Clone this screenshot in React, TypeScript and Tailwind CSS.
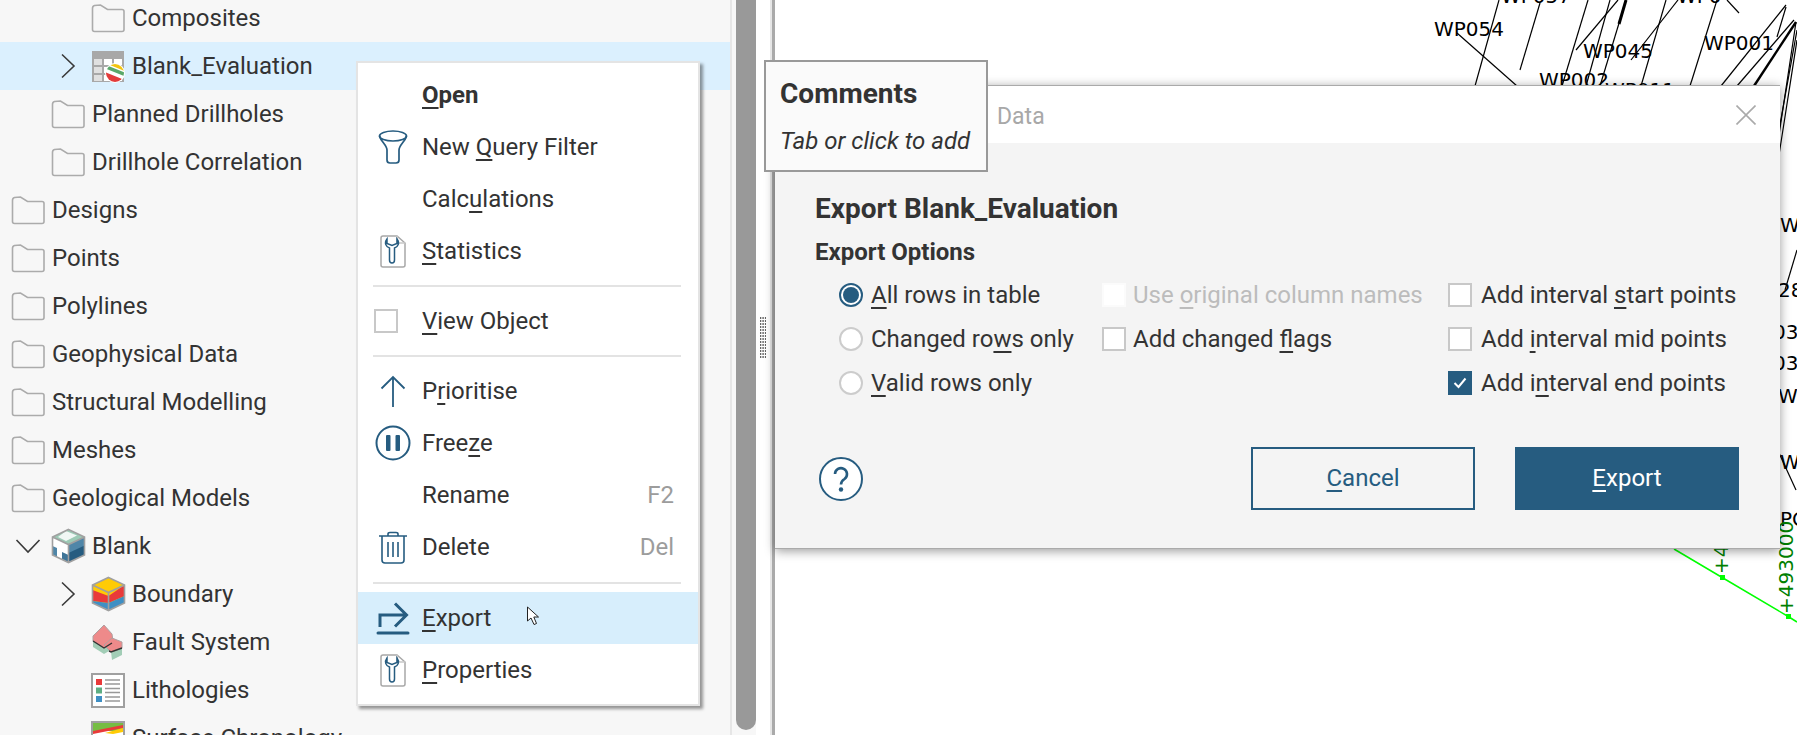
import React from "react";

// "&" marks the mnemonic letter, same as the app's own labels
function Mn({ text }: { text: string }) {
  const i = text.indexOf("&");
  if (i < 0) return <>{text}</>;
  return (
    <>
      {text.slice(0, i)}
      <span className="underline decoration-[1.5px] underline-offset-[4px] [text-decoration-skip-ink:none]">{text[i + 1]}</span>
      {text.slice(i + 2)}
    </>
  );
}

function FolderIcon() {
  return (
    <svg width="34" height="29" viewBox="0 0 34 29" fill="none" stroke="#ababab" strokeWidth="1.6">
      <path d="M1.5 4.5 Q1.5 2 3.5 1.5 L9.5 1 L16.5 5.5 L31 5.5 Q33 5.5 33 7.5 L33 25.5 Q33 27.5 31 27.5 L3.5 27.5 Q1.5 27.5 1.5 25.5 Z" />
    </svg>
  );
}

function TableIcon() {
  return (
    <svg width="34" height="33" viewBox="0 0 34 33">
      <defs>
        <clipPath id="ball">
          <circle cx="24" cy="23" r="9" />
        </clipPath>
      </defs>
      <rect x="1" y="1" width="32" height="31" fill="#a8a8a8" />
      {[3, 13, 23].map((x) =>
        [9, 17, 25].map((y) => <rect key={`${x}-${y}`} x={x} y={y} width="8" height="6" fill={x === 3 ? "#e0e0e0" : "#ffffff"} />)
      )}
      <circle cx="24" cy="23" r="10" fill="#ffffff" />
      <g clipPath="url(#ball)">
        <g transform="rotate(22 24 23)">
          <rect x="12" y="13" width="24" height="4.5" fill="#f2c40f" />
          <rect x="12" y="19" width="24" height="3.5" fill="#59a86a" />
          <rect x="12" y="26" width="24" height="8" fill="#e23b3b" />
        </g>
      </g>
    </svg>
  );
}

function BlankCube() {
  return (
    <svg width="35" height="36" viewBox="0 0 35 36">
      <path d="M17.5 1.5 L33.5 9 L33.5 27 L17.5 34.5 L1.5 27 L1.5 9 Z" fill="#ffffff" />
      <path d="M17.5 1.5 L33.5 9 L17.5 16.5 L1.5 9 Z" fill="#9ccab5" />
      <path d="M15 3 L26 7.5 L15 13 L7 9 Z" fill="#ffffff" opacity="0.85" />
      <path d="M17.5 16.5 L33.5 9 L33.5 27 L17.5 34.5 Z" fill="#4f86a8" />
      <path d="M17.5 25 L33.5 17.5 L33.5 27 L17.5 34.5 Z" fill="#265c80" />
      <path d="M1.5 18 L6 20 L6 29 L1.5 27 Z" fill="#4f86a8" />
      <path d="M6 21 L11 23 L11 32 L6 29.5 Z" fill="#ffffff" />
      <path d="M11 24 L17.5 27 L17.5 34.5 L11 31.5 Z" fill="#3f7598" />
      <path d="M17.5 1.5 L33.5 9 L33.5 27 L17.5 34.5 L1.5 27 L1.5 9 Z M1.5 9 L17.5 16.5 L33.5 9 M17.5 16.5 L17.5 34.5" fill="none" stroke="#a0a0a0" strokeWidth="1.6" />
    </svg>
  );
}

function BoundaryCube() {
  return (
    <svg width="35" height="36" viewBox="0 0 35 36">
      <path d="M17.5 1.5 L33.5 9 L33.5 27 L17.5 34.5 L1.5 27 L1.5 9 Z" fill="#ffcb05" />
      <path d="M1.5 14 L17.5 20 L33.5 9 L33.5 20 L17.5 27 L1.5 25 Z" fill="#e93a3a" />
      <path d="M1.5 25 L17.5 27 L33.5 20 L33.5 27 L17.5 34.5 L1.5 27 Z" fill="#3f8fc4" />
      <path d="M17.5 1.5 L33.5 9 L33.5 27 L17.5 34.5 L1.5 27 L1.5 9 Z M1.5 9 L17.5 16.5 L33.5 9 M17.5 16.5 L17.5 34.5" fill="none" stroke="#a0a0a0" strokeWidth="1.6" />
    </svg>
  );
}

function FaultIcon() {
  return (
    <svg width="34" height="37" viewBox="0 0 34 37">
      <path d="M2 17 L13 24 L13 30 L2 23 Z" fill="#a2cdb6" />
      <path d="M13 24 L18 21 L18 27 L13 30 Z" fill="#a2cdb6" />
      <path d="M20 28 L31 24 L31 31 L21 36 Z" fill="#a2cdb6" />
      <path d="M13 1 L2 12 L2 17 L13 24 L22 17 L21 10 Z" fill="#ee8a8a" stroke="#b0a0a0" strokeWidth="1" />
      <path d="M21 14 L13 21 L20 28 L31 24 L31 18 Z" fill="#ee8a8a" stroke="#b0a0a0" strokeWidth="1" />
      <path d="M2 17 L13 24 L21 19" fill="none" stroke="#333333" strokeWidth="1.4" />
      <path d="M18 27 L20 28 L31 24" fill="none" stroke="#333333" strokeWidth="1.4" />
    </svg>
  );
}

function LegendIcon() {
  return (
    <svg width="34" height="35" viewBox="0 0 34 35">
      <rect x="1" y="1" width="32" height="33" fill="#ffffff" stroke="#a0a0a0" strokeWidth="2" />
      <rect x="5" y="6" width="6" height="6" fill="#e93a3a" />
      <rect x="5" y="14.5" width="6" height="6" fill="#5dae83" />
      <rect x="5" y="23" width="6" height="6" fill="#3f8fc4" />
      <path d="M14 7 H29 M14 11 H29 M14 15.5 H29 M14 19.5 H29 M14 24 H29 M14 28 H29" stroke="#999999" strokeWidth="1.6" />
    </svg>
  );
}

function ChronologyIcon() {
  return (
    <svg width="34" height="35" viewBox="0 0 34 35">
      <rect x="1" y="1" width="32" height="33" fill="#ffffff" stroke="#a0a0a0" strokeWidth="2" />
      <rect x="2" y="2" width="30" height="8" fill="#76bd43" />
      <path d="M2 10 L32 4 L32 7 L2 13 Z" fill="#e93a3a" />
      <path d="M14 12 L32 7 L32 11 L22 13 Z" fill="#ffcb05" />
    </svg>
  );
}

function ChevronRight() {
  return (
    <svg width="16" height="26" viewBox="0 0 16 26" fill="none" stroke="#3a3a3a" strokeWidth="1.6" className="ml-[9px]">
      <path d="M2 1.5 L14 13 L2 24.5" />
    </svg>
  );
}

function ChevronDown() {
  return (
    <svg width="26" height="16" viewBox="0 0 26 16" fill="none" stroke="#3a3a3a" strokeWidth="1.6" className="ml-[4px]">
      <path d="M1.5 2 L13 14 L24.5 2" />
    </svg>
  );
}

const treeIcons: Record<string, React.ReactNode> = {
  folder: <FolderIcon />,
  table: <TableIcon />,
  blank: <BlankCube />,
  boundary: <BoundaryCube />,
  fault: <FaultIcon />,
  legend: <LegendIcon />,
  chrono: <ChronologyIcon />,
};

type TreeRow = { label: string; level: number; icon: string; arrow?: "right" | "down"; selected?: boolean };

const treeRows: TreeRow[] = [
  { label: "Composites", level: 2, icon: "folder" },
  { label: "Blank_Evaluation", level: 2, icon: "table", arrow: "right", selected: true },
  { label: "Planned Drillholes", level: 1, icon: "folder" },
  { label: "Drillhole Correlation", level: 1, icon: "folder" },
  { label: "Designs", level: 0, icon: "folder" },
  { label: "Points", level: 0, icon: "folder" },
  { label: "Polylines", level: 0, icon: "folder" },
  { label: "Geophysical Data", level: 0, icon: "folder" },
  { label: "Structural Modelling", level: 0, icon: "folder" },
  { label: "Meshes", level: 0, icon: "folder" },
  { label: "Geological Models", level: 0, icon: "folder" },
  { label: "Blank", level: 1, icon: "blank", arrow: "down" },
  { label: "Boundary", level: 2, icon: "boundary", arrow: "right" },
  { label: "Fault System", level: 2, icon: "fault" },
  { label: "Lithologies", level: 2, icon: "legend" },
  { label: "Surface Chronology", level: 2, icon: "chrono" },
];

function Tree() {
  return (
    <div className="w-[732px] h-full shrink-0 border-r-2 border-[#e6e6e6] overflow-hidden">
      <div className="-mt-[6px]">
        {treeRows.map((r) => (
          <div key={r.label} className={`flex items-center h-12 pl-[11px] ${r.selected ? "bg-[#dbf0fe]" : ""}`}>
            {r.level === 2 && <div className="w-10 shrink-0" />}
            {r.level >= 1 && (
              <div className="w-10 shrink-0">
                {r.arrow === "right" && <ChevronRight />}
                {r.arrow === "down" && <ChevronDown />}
              </div>
            )}
            <div className="w-[41px] shrink-0 flex items-center">{treeIcons[r.icon]}</div>
            <span>{r.label}</span>
          </div>
        ))}
      </div>
    </div>
  );
}

function Grip() {
  return (
    <svg width="6" height="42" viewBox="0 0 6 42">
      {Array.from({ length: 14 }).map((_, row) =>
        [0, 2.5, 5].map((x) => <rect key={`${row}-${x}`} x={x - 0.1} y={row * 3} width="1.4" height="2" fill="#666666" />)
      )}
    </svg>
  );
}

const menuIconClass = "fill-none stroke-[#265c80]";

function FunnelIcon() {
  return (
    <svg width="30" height="36" viewBox="0 0 30 36" className={menuIconClass} strokeWidth="1.7">
      <ellipse cx="15" cy="7" rx="13.5" ry="5" />
      <path d="M1.5 7 C3 13 9 16 9 21 L9 31 Q9 34 12 34 L18 34 Q21 34 21 31 L21 21 C21 16 27 13 28.5 7" />
    </svg>
  );
}

function DocWrenchIcon() {
  return (
    <svg width="26" height="33" viewBox="0 0 26 33" fill="none" strokeWidth="1.5">
      <path d="M3 1 H17 L25 8 V30 Q25 32 23 32 H3 Q1 32 1 30 V3 Q1 1 3 1 Z" stroke="#a8a8a8" />
      <path d="M17 1 V8 H25" stroke="#c8c8c8" />
      <path d="M7 4 C4 8 6 12 9.5 13 V25 Q9.5 28 12 28 Q14.5 28 14.5 25 V13 C18 12 20 8 17 4 V8.5 L12 10.5 L7 8.5 Z" stroke="#265c80" />
    </svg>
  );
}

function ArrowUpIcon() {
  return (
    <svg width="26" height="33" viewBox="0 0 26 33" className={menuIconClass} strokeWidth="1.8">
      <path d="M13 2 V32 M1.5 13.5 L13 2 L24.5 13.5" />
    </svg>
  );
}

function PauseIcon() {
  return (
    <svg width="36" height="36" viewBox="0 0 36 36">
      <circle cx="18" cy="18" r="16.5" fill="none" stroke="#265c80" strokeWidth="2" />
      <rect x="11" y="10" width="4.5" height="16" rx="1" fill="#265c80" />
      <rect x="20.5" y="10" width="4.5" height="16" rx="1" fill="#265c80" />
    </svg>
  );
}

function TrashIcon() {
  return (
    <svg width="30" height="33" viewBox="0 0 30 33" className={menuIconClass} strokeWidth="1.6">
      <path d="M1 5 H29 M10 5 V3 Q10 1.5 12 1.5 H18 Q20 1.5 20 3 V5" />
      <path d="M4 5 V29 Q4 32 7 32 H23 Q26 32 26 29 V5" />
      <path d="M10 11 V26 M15 11 V26 M20 11 V26" />
    </svg>
  );
}

function ExportIcon() {
  return (
    <svg width="34" height="33" viewBox="0 0 34 33" fill="none" stroke="#265c80" strokeWidth="3">
      <path d="M4 25 V13 H30 M19 1.5 L30.5 13 L19 24.5" />
      <path d="M2 31 H32" strokeLinecap="round" />
    </svg>
  );
}

function Sep({ h }: { h: string }) {
  return (
    <div className={`${h} flex items-center pl-[15px] pr-[17px]`}>
      <div className="h-[2px] w-full bg-[#e3e3e3]" />
    </div>
  );
}

function MenuItem({ label, icon, shortcut, bold, hover }: { label: string; icon?: React.ReactNode; shortcut?: string; bold?: boolean; hover?: boolean }) {
  return (
    <div className={`flex items-center h-[52px] ${hover ? "bg-[#d7eefc]" : ""} ${bold ? "font-bold" : ""}`}>
      <div className="w-[64px] shrink-0 flex justify-center pl-[6px]">{icon}</div>
      <span className="flex-1"><Mn text={label} /></span>
      {shortcut && <span className="pr-[24px] text-[#9c9c9c]">{shortcut}</span>}
    </div>
  );
}

function ContextMenu() {
  return (
    <div className="absolute left-[356px] top-[61px] w-[344px] h-[645px] bg-white border-2 border-[#e4e4e4] pt-[6px] shadow-[3px_3px_3px_rgba(0,0,0,0.4)]">
      <MenuItem label="&Open" bold />
      <MenuItem label="New &Query Filter" icon={<FunnelIcon />} />
      <MenuItem label="Calc&ulations" />
      <MenuItem label="&Statistics" icon={<DocWrenchIcon />} />
      <Sep h="h-[18px]" />
      <MenuItem
        label="&View Object"
        icon={<div className="w-6 h-6 border-2 border-[#c8c8c8] bg-white -ml-[7px] mr-[7px]" />}
      />
      <Sep h="h-[18px]" />
      <MenuItem label="P&rioritise" icon={<ArrowUpIcon />} />
      <MenuItem label="Free&ze" icon={<PauseIcon />} />
      <MenuItem label="Rename" shortcut="F2" />
      <MenuItem label="Delete" icon={<TrashIcon />} shortcut="Del" />
      <Sep h="h-[19px]" />
      <MenuItem label="&Export" icon={<ExportIcon />} hover />
      <MenuItem label="&Properties" icon={<DocWrenchIcon />} />
    </div>
  );
}

function Cursor() {
  return (
    <svg width="14" height="20" viewBox="0 0 14 20" className="absolute left-[526px] top-[606px]">
      <path d="M1.5 1 L1.5 15 L5 12 L8 18.5 L10.5 17.5 L7.8 11 L12.5 11 Z" fill="#ffffff" stroke="#222222" strokeWidth="1" />
    </svg>
  );
}

function CanvasView() {
  const lines = [
    [1499, 0, 1475, 86], [1540, 3, 1520, 70], [1457, 33, 1517, 86], [1588, 0, 1562, 86],
    [1610, 0, 1586, 86], [1618, 0, 1576, 50], [1666, 0, 1641, 86], [1678, 0, 1631, 60],
    [1717, 0, 1690, 86], [1727, 0, 1739, 13], [1786, 5, 1721, 86], [1794, 20, 1737, 86],
    [1786, 7, 1777, 37], [1796, 22, 1779, 135], [1797, 40, 1779, 155], [1797, 30, 1779, 130],
    [1779, 453, 1796, 490], [1797, 250, 1785, 290],
  ];
  const labels: [string, number, number][] = [
    ["WP054", 1434, 36], ["WP057", 1501, 3], ["WP045", 1583, 58], ["WP001", 1704, 50],
    ["WP002", 1539, 87], ["WP011", 1605, 97], ["WP0", 1677, 3],
    ["W", 1780, 232], ["28", 1778, 297], ["03", 1773, 339], ["03", 1773, 370],
    ["W", 1778, 403], ["W", 1780, 469], ["PC", 1780, 526],
  ];
  return (
    <div className="flex-1 h-full bg-white overflow-hidden">
      <svg width="1022" height="735" viewBox="775 0 1022 735" className="block">
        {lines.map((l, i) => (
          <line key={i} x1={l[0]} y1={l[1]} x2={l[2]} y2={l[3]} stroke="#000000" strokeWidth="1.2" />
        ))}
        <line x1="1626" y1="0" x2="1600" y2="86" stroke="#000000" strokeWidth="1.2" />
        <line x1="1626" y1="0" x2="1619" y2="24" stroke="#000000" strokeWidth="3" />
        <line x1="1796" y1="22" x2="1754" y2="86" stroke="#000000" strokeWidth="2.4" />
        {labels.map(([t, x, y], i) => (
          <text key={i} x={x} y={y} fontFamily="DejaVu Sans" fontSize="20" fill="#000000">{t}</text>
        ))}
        <polyline points="1674,549 1723,578 1789,617 1797,622" fill="none" stroke="#00ff00" strokeWidth="1.5" />
        <rect x="1720" y="575" width="5" height="5" fill="#00ff00" />
        <rect x="1786" y="614" width="5" height="5" fill="#00ff00" />
        <text transform="translate(1793 614) rotate(-90)" fontFamily="DejaVu Sans" fontSize="20" fill="#008000">+493000</text>
        <text transform="translate(1728 574) rotate(-90)" fontFamily="DejaVu Sans" fontSize="20" fill="#008000">+493000</text>
      </svg>
    </div>
  );
}

function Radio({ label, checked }: { label: string; checked?: boolean }) {
  return (
    <div className="flex items-center gap-2">
      <div className={`w-6 h-6 rounded-full border-2 flex items-center justify-center bg-white ${checked ? "border-[#265c80]" : "border-[#cccccc]"}`}>
        {checked && <div className="w-4 h-4 rounded-full bg-[#265c80]" />}
      </div>
      <span><Mn text={label} /></span>
    </div>
  );
}

function Check({ label, checked, disabled, wide }: { label: string; checked?: boolean; disabled?: boolean; wide?: boolean }) {
  const box = checked ? "bg-[#265c80] border-[#265c80]" : disabled ? "bg-white border-[#fbfbfb]" : "bg-white border-[#c8c8c8]";
  return (
    <div className={`flex items-center ${wide ? "gap-[9px]" : "gap-[7px]"}`}>
      <div className={`w-6 h-6 border-2 flex items-center justify-center ${box}`}>
        {checked && (
          <svg width="14" height="12" viewBox="0 0 14 12" fill="none" stroke="#ffffff" strokeWidth="2">
            <path d="M1.5 6 L5.5 10 L12.5 1.5" />
          </svg>
        )}
      </div>
      <span className={disabled ? "text-[#bcbcbc]" : ""}><Mn text={label} /></span>
    </div>
  );
}

function ExportDialog() {
  return (
    <div className="absolute left-[775px] top-[85px] w-[1005px] h-[464px] flex flex-col border-t border-b border-[#aaaaaa] bg-[#f4f4f4] shadow-[0_2px_10px_rgba(0,0,0,0.4)]">
      <div className="h-[57px] shrink-0 bg-white flex items-center justify-between pl-[222px] pr-[24px]">
        <span className="text-[#a8a8a8] text-[23px] pt-[5px]">Data</span>
        <svg width="20" height="20" viewBox="0 0 20 20" stroke="#aaaaaa" strokeWidth="1.6">
          <path d="M0.5 0.5 L19.5 19.5 M19.5 0.5 L0.5 19.5" />
        </svg>
      </div>
      <div className="flex-1 pl-[40px] pr-[41px] pt-[51px]">
        <div className="text-[28px] font-bold leading-[30px]">Export Blank_Evaluation</div>
        <div className="mt-[13px] font-bold leading-[30px]">Export Options</div>
        <div className="mt-[6px] ml-[24px] grid grid-cols-[263px_346px_1fr] auto-rows-[44px] items-center">
          <Radio label="&All rows in table" checked />
          <Check label="Use &original column names" disabled />
          <Check label="Add interval &start points" wide />
          <Radio label="Changed ro&ws only" />
          <Check label="Add changed &flags" />
          <Check label="Add &interval mid points" wide />
          <Radio label="&Valid rows only" />
          <div />
          <Check label="Add i&nterval end points" checked wide />
        </div>
        <div className="mt-[42px] flex items-center justify-between">
          <svg width="44" height="44" viewBox="0 0 44 44" className="ml-[4px]">
            <circle cx="22" cy="22" r="21" fill="#ffffff" stroke="#265c80" strokeWidth="2" />
            <path d="M16 17 A6 6 0 1 1 25.5 22 C23 23.5 22 24.5 22 27.5" fill="none" stroke="#265c80" strokeWidth="2.6" />
            <circle cx="22" cy="32.5" r="2.2" fill="#265c80" />
          </svg>
          <div className="flex gap-10">
            <button className="w-[224px] h-[63px] pb-[2px] border-2 border-[#265c80] text-[#265c80]"><Mn text="&Cancel" /></button>
            <button className="w-[224px] h-[63px] pb-[2px] bg-[#265c80] text-white"><Mn text="&Export" /></button>
          </div>
        </div>
      </div>
    </div>
  );
}

function CommentsTip() {
  return (
    <div className="absolute left-[764px] top-[60px] w-[224px] h-[112px] border-2 border-[#999999] bg-[#fafafa] pl-[14px] pt-[17px]">
      <div className="text-[28px] font-bold leading-[30px]">Comments</div>
      <div className="italic mt-[17px] leading-[30px] whitespace-nowrap">Tab or click to add</div>
    </div>
  );
}

export default function App() {
  return (
    <div className="relative flex w-[1797px] h-[735px] overflow-hidden bg-[#f7f7f7] text-[#333333] text-[24px] font-[family-name:Roboto,sans-serif]">
      <Tree />
      <div className="w-6 h-full shrink-0 pl-1">
        <div className="w-5 h-[730px] bg-[#999999] rounded-b-[10px]" />
      </div>
      <div className="w-[19px] h-full shrink-0 border-r-[3px] border-[#aaaaaa]">
        <div className="w-full h-full bg-white border-r-2 border-[#e6e6e6] flex items-center justify-center pb-[60px]">
          <Grip />
        </div>
      </div>
      <CanvasView />
      <ContextMenu />
      <Cursor />
      <ExportDialog />
      <CommentsTip />
    </div>
  );
}
